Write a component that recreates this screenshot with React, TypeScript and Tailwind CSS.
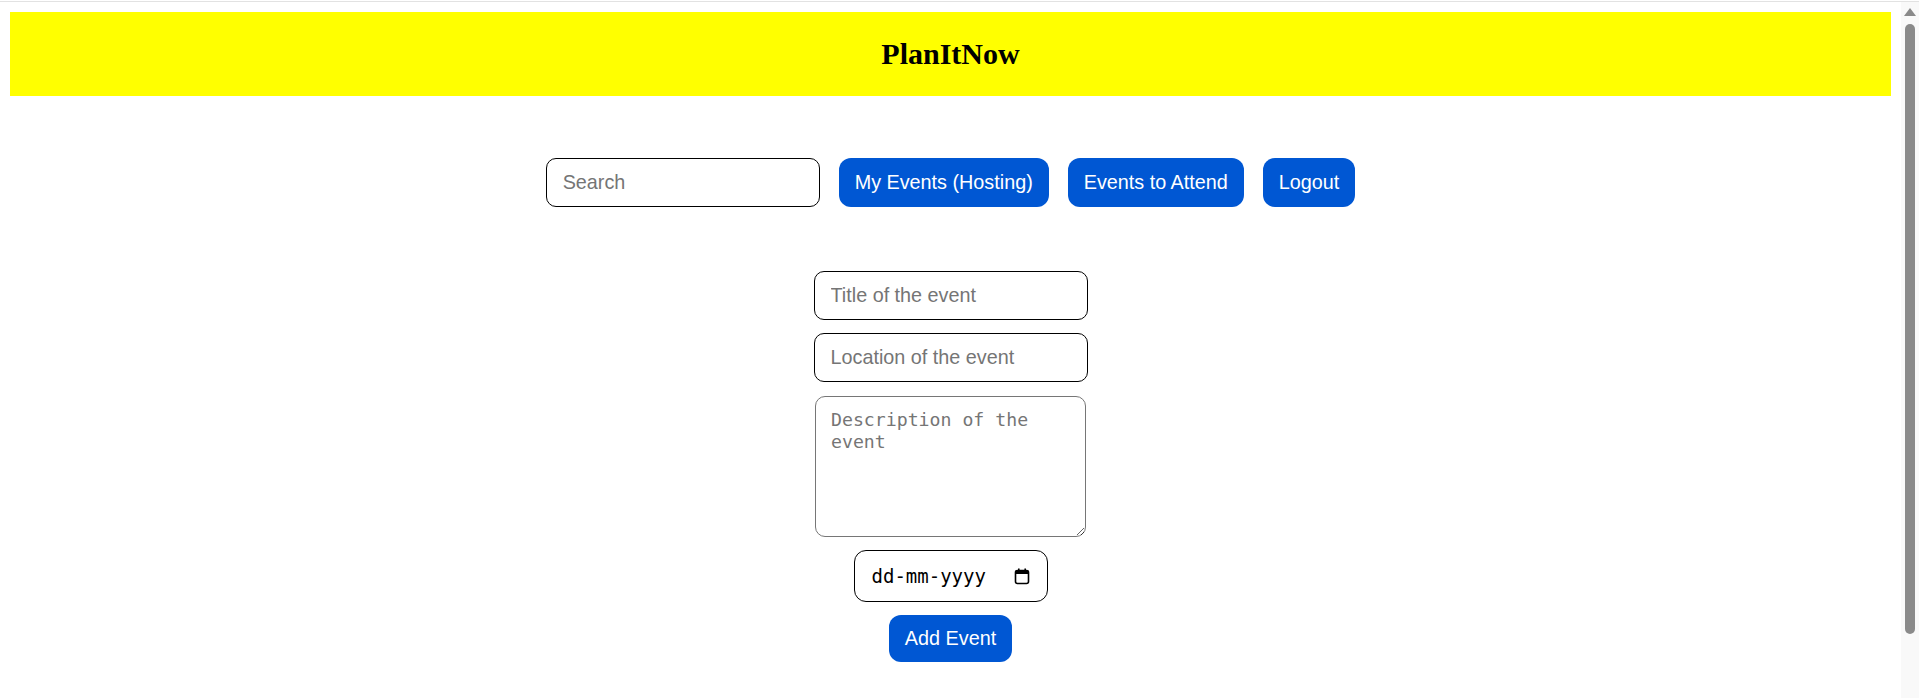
import { useState } from "react";

const navButtons = ["My Events (Hosting)", "Events to Attend", "Logout"];

function CalendarIcon() {
  return (
    <svg width="16" height="17" viewBox="0 0 16 17" fill="none">
      <rect x="1.5" y="2.5" width="13" height="13" rx="2" stroke="#000" strokeWidth="1.6" />
      <rect x="1.5" y="2.5" width="13" height="3.5" fill="#000" />
      <rect x="4" y="0.5" width="1.6" height="3" fill="#000" />
      <rect x="10.4" y="0.5" width="1.6" height="3" fill="#000" />
    </svg>
  );
}

export default function App() {
  const [search, setSearch] = useState("");
  const [title, setTitle] = useState("");
  const [location, setLocation] = useState("");
  const [description, setDescription] = useState("");

  return (
    <div className="flex flex-col h-[698px] overflow-hidden bg-white pt-px font-['Liberation_Sans',Arial,sans-serif]">
      <div className="h-px bg-[#e2e2e2] shrink-0" />

      <div className="flex flex-1 min-h-0">
        <main className="flex-1 flex flex-col">
          <header className="mt-[10px] mx-[10px] h-[84px] bg-[#ffff00] flex items-center justify-center">
            <h1 className="text-[30px] font-bold leading-none text-black font-['Liberation_Serif','Times_New_Roman',serif]">
              PlanItNow
            </h1>
          </header>

          {/* nav */}
          <div className="mt-[62px] flex justify-center gap-[19px]">
            <input
              type="text"
              value={search}
              onChange={(e) => setSearch(e.target.value)}
              placeholder="Search"
              className="w-[274px] h-[49px] px-[16px] border border-black rounded-[10px] text-[19.8px] text-black placeholder:text-[#757575] outline-none"
            />
            {navButtons.map((label) => (
              <button
                key={label}
                className="h-[49px] px-[16px] rounded-[12px] bg-[#0057d3] text-white text-[19.8px] leading-none"
              >
                {label}
              </button>
            ))}
          </div>

          {/* new event form */}
          <form
            className="mt-[64px] flex flex-col items-center"
            onSubmit={(e) => e.preventDefault()}
          >
            <input
              type="text"
              value={title}
              onChange={(e) => setTitle(e.target.value)}
              placeholder="Title of the event"
              className="w-[274px] h-[49px] px-[16px] border border-black rounded-[10px] text-[19.8px] placeholder:text-[#757575] outline-none"
            />
            <input
              type="text"
              value={location}
              onChange={(e) => setLocation(e.target.value)}
              placeholder="Location of the event"
              className="mt-[13px] w-[274px] h-[49px] px-[16px] border border-black rounded-[10px] text-[19.8px] placeholder:text-[#757575] outline-none"
            />
            <textarea
              value={description}
              onChange={(e) => setDescription(e.target.value)}
              placeholder="Description of the event"
              className="mt-[14px] w-[271px] h-[141px] px-[15px] pt-[12px] border border-[#767676] rounded-[10px] text-[18.2px] leading-[22px] font-['DejaVu_Sans_Mono',monospace] placeholder:text-[#757575] outline-none"
            />
            <div className="mt-[13px] w-[194px] h-[52px] pl-[17px] pr-[17px] border border-black rounded-[12px] flex items-center justify-between">
              <span className="text-[19px] text-black font-['DejaVu_Sans_Mono',monospace]">dd-mm-yyyy</span>
              <CalendarIcon />
            </div>
            <button
              type="submit"
              className="mt-[13px] h-[47px] px-[16px] rounded-[12px] bg-[#0057d3] text-white text-[19.8px] leading-none"
            >
              Add Event
            </button>
          </form>
        </main>

        {/* scrollbar */}
        <aside className="w-[18px] shrink-0 bg-[#f9f9f9] flex flex-col items-center pt-[6px]">
          <div className="w-0 h-0 border-l-[6px] border-r-[6px] border-b-[8px] border-l-transparent border-r-transparent border-b-[#8a8a8a]" />
          <div className="mt-[8px] w-[10px] h-[610px] rounded-full bg-[#8a8a8a]" />
        </aside>
      </div>
    </div>
  );
}
